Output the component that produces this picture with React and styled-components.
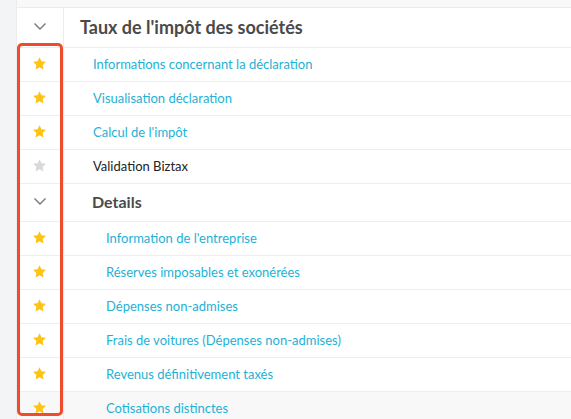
import React from 'react'
import styled, { createGlobalStyle } from 'styled-components'

const GlobalStyle = createGlobalStyle`
  html, body { margin: 0; padding: 0; background: #fff; }
  body { font-family: Lato, "Open Sans", sans-serif; }
`

const rows = [
  { type: 'section', label: "Taux de l'impôt des sociétés", size: 'lg' },
  { type: 'item', label: 'Informations concernant la déclaration', level: 1, starred: true },
  { type: 'item', label: 'Visualisation déclaration', level: 1, starred: true },
  { type: 'item', label: "Calcul de l'impôt", level: 1, starred: true },
  { type: 'item', label: 'Validation Biztax', level: 1, starred: false },
  { type: 'section', label: 'Details', size: 'md' },
  { type: 'item', label: "Information de l'entreprise", level: 2, starred: true },
  { type: 'item', label: 'Réserves imposables et exonérées', level: 2, starred: true },
  { type: 'item', label: 'Dépenses non-admises', level: 2, starred: true },
  { type: 'item', label: 'Frais de voitures (Dépenses non-admises)', level: 2, starred: true },
  { type: 'item', label: 'Revenus définitivement taxés', level: 2, starred: true },
  { type: 'item', label: 'Cotisations distinctes', level: 2, starred: true, hover: true }
]

const Star = ({ on }) => (
  <svg width="15" height="15" viewBox="0 0 24 24">
    <path
      d="M12 1.8l3.1 6.6 7.2.9-5.3 5 1.4 7.1L12 17.9l-6.4 3.5 1.4-7.1-5.3-5 7.2-.9z"
      fill={on ? '#fcc419' : '#d9d9d9'}
    />
  </svg>
)

const Chevron = () => (
  <svg width="14" height="9" viewBox="0 0 14 9">
    <path d="M1.5 1.5l5.5 5.5 5.5-5.5" fill="none" stroke="#777" strokeWidth="1.4" />
  </svg>
)

export default function App () {
  return (
    <Page>
      <GlobalStyle />
      <Strip />
      <Table>
        <TopBar />
        {rows.map((row, i) =>
          row.type === 'section' ? (
            <Row key={i} tall={row.size === 'lg' ? 39 : 37}>
              <IconCell><Chevron /></IconCell>
              <SectionTitle size={row.size}>{row.label}</SectionTitle>
            </Row>
          ) : (
            <Row key={i} tall={33} hover={row.hover}>
              <IconCell><Star on={row.starred} /></IconCell>
              <Label level={row.level} link={row.starred}>{row.label}</Label>
            </Row>
          )
        )}
      </Table>
      <Highlight />
    </Page>
  )
}

const Page = styled.div`
  position: relative;
  display: flex;
  width: 571px;
  height: 419px;
  overflow: hidden;
`

const Strip = styled.div`
  width: 16px;
  flex: none;
  background: #f3f4f6;
  border-right: 1px solid #ececec;
`

const Table = styled.div`
  flex: 1;
  display: flex;
  flex-direction: column;
`

const TopBar = styled.div`
  height: 7px;
  flex: none;
  background: #f9f9f9;
  border-bottom: 1px solid #ececec;
`

const Row = styled.div`
  display: grid;
  grid-template-columns: 47px 1fr;
  height: ${p => p.tall}px;
  flex: none;
  border-bottom: 1px solid #eeeeee;
  background: ${p => (p.hover ? '#f8f8f8' : '#fff')};
`

const IconCell = styled.div`
  display: flex;
  align-items: center;
  justify-content: center;
  border-right: 1px solid #ececec;
  padding: 0 1px 2px 0;
`

const SectionTitle = styled.div`
  display: flex;
  align-items: center;
  padding: 0 0 2px ${p => (p.size === 'lg' ? 16 : 28)}px;
  font-size: ${p => (p.size === 'lg' ? 18 : 16)}px;
  font-weight: 700;
  color: #4a4a4a;
`

const Label = styled.div`
  display: flex;
  align-items: center;
  padding: 0 0 2px ${p => (p.level === 2 ? 42 : 29)}px;
  font-size: 13px;
  color: ${p => (p.link ? '#1eb1d6' : '#222')};
`

const Highlight = styled.div`
  position: absolute;
  left: 17px;
  top: 43px;
  width: 40px;
  height: 367px;
  border: 3px solid #f04b2c;
  border-radius: 5px;
  pointer-events: none;
`
